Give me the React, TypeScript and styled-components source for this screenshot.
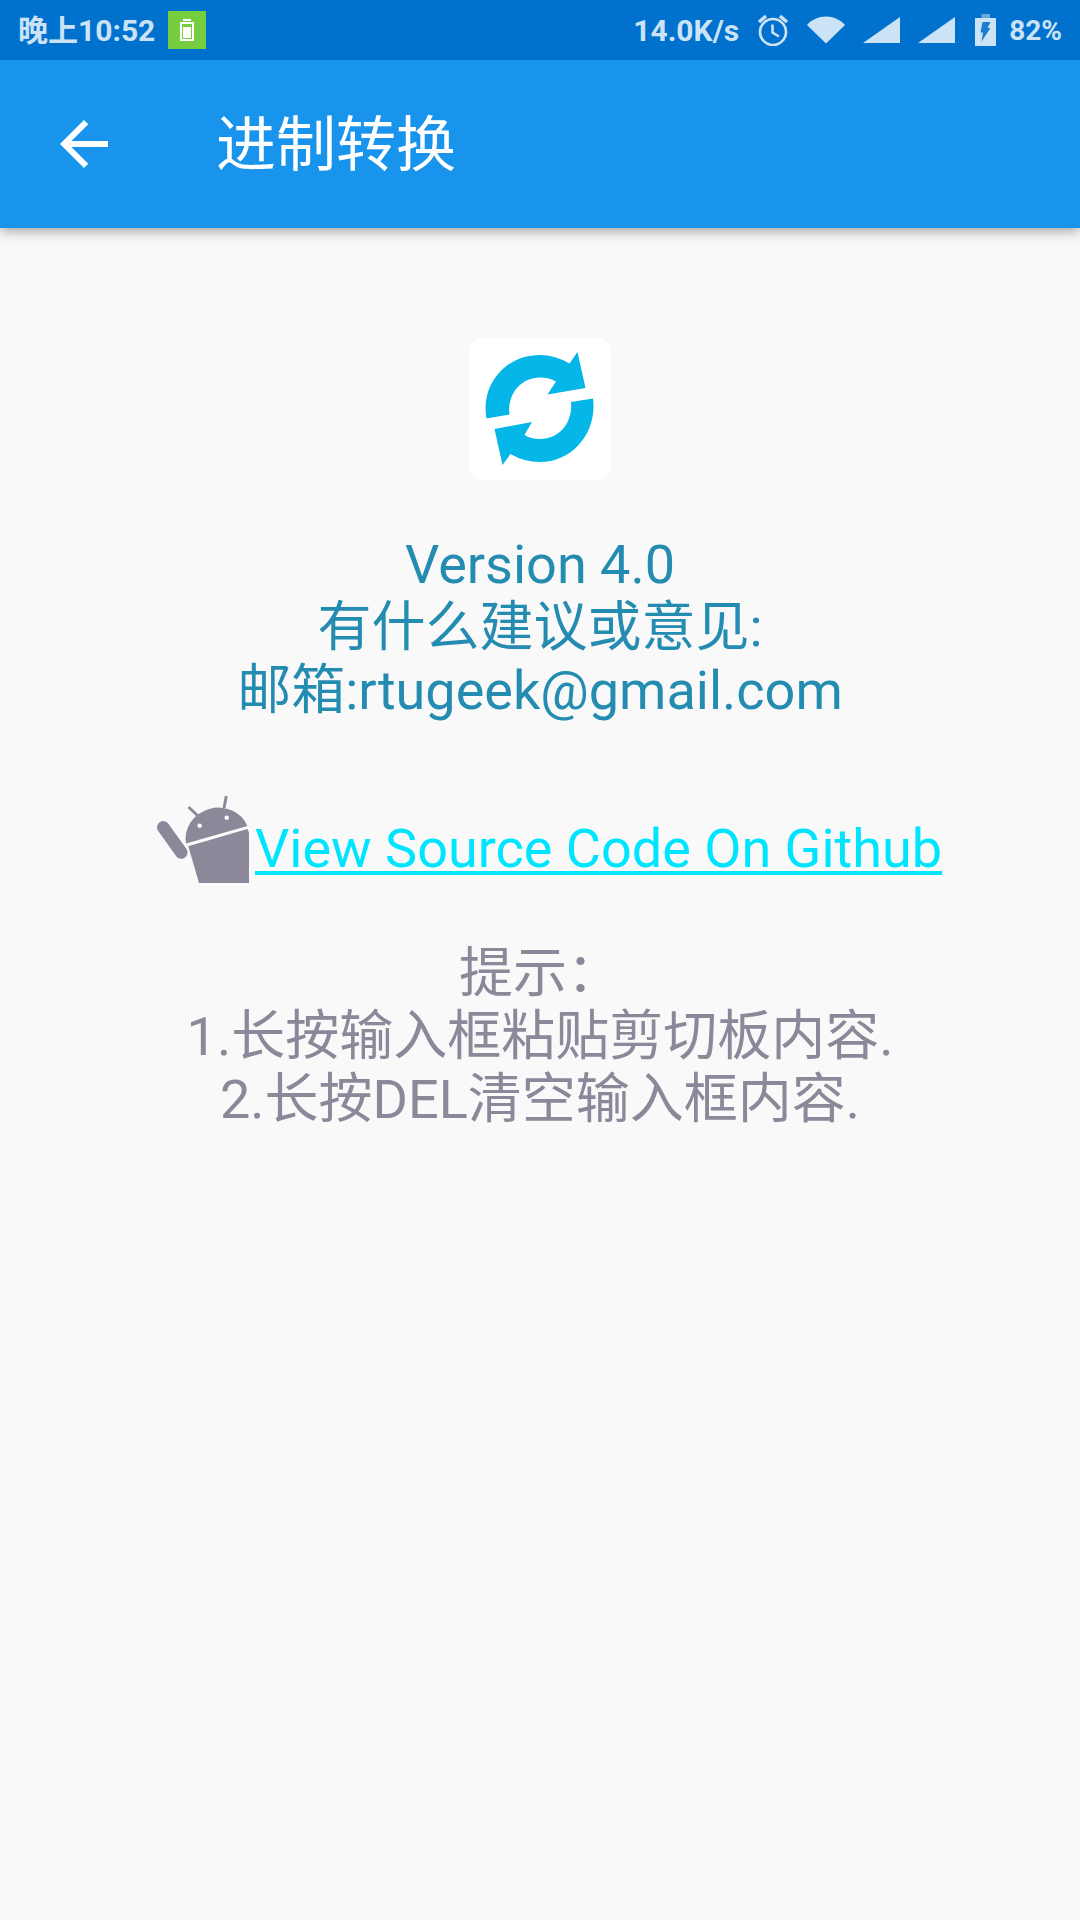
import React from 'react';
import styled, { createGlobalStyle } from 'styled-components';

const GlobalStyle = createGlobalStyle`
  *, *::before, *::after { box-sizing: border-box; }
  html { background: #fafafa; }
  body {
    margin: 0;
    background: #fafafa;
    font-family: Roboto, "Noto Sans CJK SC", sans-serif;
  }
  svg { display: block; flex: none; }
`;

const StatusBar = styled.div`
  display: flex;
  align-items: center;
  justify-content: space-between;
  position: relative;
  z-index: 1;
  height: 60px;
  padding: 0 18px;
  background: #0072ce;
  color: #cce3f5;
  line-height: 36px;
`;

const StatusGroup = styled.div<{ $gap: number }>`
  display: flex;
  align-items: center;
  gap: ${({ $gap }) => $gap}px;
`;

const StatusText = styled.span<{ $size?: number }>`
  padding-top: 2px;
  font-size: ${({ $size = 30 }) => $size}px;
  font-weight: 700;
  white-space: nowrap;
`;

const BatteryGroup = styled(StatusGroup)`
  margin-left: 2px;
`;

const AppBar = styled.header`
  display: flex;
  align-items: center;
  height: 168px;
  padding: 0 48px;
  background: #1994ec;
  color: #ffffff;
  position: relative;
  box-shadow: 0 3px 12px rgba(0, 0, 0, 0.36);
`;

const BackButton = styled.button`
  display: flex;
  align-items: center;
  width: 168px;
  height: 72px;
  padding: 0;
  border: 0;
  background: none;
  color: inherit;
  cursor: pointer;
`;

const Title = styled.h1`
  margin: 0;
  padding-top: 4px;
  font-size: 60px;
  font-weight: 400;
  line-height: 72px;
`;

const About = styled.main`
  display: flex;
  flex-direction: column;
  align-items: center;
  padding: 110px 48px 50px;
  background: #f9f9f9;
  font-size: 54px;
  line-height: 63px;
  text-align: center;
`;

const LogoTile = styled.div`
  display: flex;
  width: 142px;
  height: 142px;
  border-radius: 14px;
  background: #ffffff;
`;

const Paragraph = styled.p<{ $color: string; $top: number }>`
  margin: ${({ $top }) => $top}px 0 0;
  color: ${({ $color }) => $color};
`;

const SourceRow = styled.div`
  display: flex;
  align-items: flex-end;
  margin-top: 71px;
`;

const SourceLink = styled.a`
  padding-bottom: 3px;
  color: #00e5ff;
  text-decoration: underline;
  text-decoration-thickness: 4px;
  text-underline-offset: 4px;
  text-decoration-skip-ink: none;
`;

const BatterySaverIcon = () => (
  <svg width="38" height="38" viewBox="0 0 38 38" aria-hidden="true">
    <rect width="38" height="38" fill="#76cd3e" />
    <rect x="15" y="8" width="8" height="2" fill="#fff" />
    <rect x="13" y="12" width="12" height="17" fill="none" stroke="#fff" strokeWidth="2" />
    <rect x="15" y="16" width="8" height="11" fill="#fff" />
  </svg>
);

const AlarmIcon = () => (
  <svg width="32" height="32" viewBox="0 0 32 32" fill="none" stroke="currentColor" aria-hidden="true">
    <circle cx="16" cy="18" r="13" strokeWidth="2.6" />
    <path d="M15.500 10.500v8l6.500 4" strokeWidth="2.600" />
    <path d="M2 8L9 2M30 8L23 2" strokeWidth="3.400" />
  </svg>
);

const WifiIcon = () => (
  <svg width="38" height="28" viewBox="0 0 38 28" fill="currentColor" aria-hidden="true">
    <path d="M0 9C5 3.500 11.500 0.500 19 0.500S33 3.500 38 9L19 27.500z" />
  </svg>
);

const SignalIcon = () => (
  <svg width="37" height="26" viewBox="0 0 37 26" fill="currentColor" aria-hidden="true">
    <path d="M37 0v26H0z" />
  </svg>
);

const ChargingIcon = () => (
  <svg width="21" height="32" viewBox="0 0 21 32" aria-hidden="true">
    <path d="M6.500 0h8.500v4h-8.500z" fill="#66aae2" />
    <path d="M0 4h21v28H0z" fill="currentColor" />
    <path d="M7.500 8h8l-3 6h3L6.500 27.500l1.500-9H5.500z" fill="#1a7dd0" />
  </svg>
);

const BackIcon = () => (
  <svg width="72" height="72" viewBox="0 0 24 24" fill="currentColor" aria-hidden="true">
    <path d="M20 11H7.830l5.590-5.590L12 4l-8 8 8 8 1.410-1.410L7.830 13H20v-2z" />
  </svg>
);

const ConvertLogo = () => (
  <svg width="142" height="142" viewBox="19 18 142 142" fill="#04b7e8" role="img" aria-label="进制转换">
    <path d="M36.500 98.500C30.500 65 55 35 90 35Q105 35 119.500 43.500L127.500 32 135.500 68 97.500 74.500 106 61.500Q99 57.500 90 57.500C71 57.500 57 74 59.500 94.500z" />
    <path d="M143 78.500C147.500 112 123 142 90 142Q74 142 60.500 134L52.500 145 44.500 109 82 102 74.500 115Q81 119 90 119C110 119 123 102 121 82z" />
  </svg>
);

const AndroidIcon = () => (
  <svg width="117" height="90" viewBox="0 0 117 90" aria-hidden="true">
    <path d="M48 50.500A32 29.500 -16 0 1 109.300 33z" fill="#8a8899" />
    <path d="M50.300 53.300L109.300 36Q111 38 111 42V90H61z" fill="#8a8899" />
    <g fill="none" stroke="#8a8899">
      <path d="M25.300 34.300L43.300 59.500" strokeWidth="12.500" strokeLinecap="round" />
      <path d="M50.500 14L59.500 22.500M88.300 3L86 15" strokeWidth="2.900" />
    </g>
    <circle cx="61.700" cy="32.700" r="2.300" fill="#f9f9f9" />
    <circle cx="88.700" cy="24.700" r="2.300" fill="#f9f9f9" />
  </svg>
);

export default function App() {
  return (
    <>
      <GlobalStyle />
      <StatusBar>
        <StatusGroup $gap={13}>
          <StatusText>晚上10:52</StatusText>
          <BatterySaverIcon />
        </StatusGroup>
        <StatusGroup $gap={18}>
          <StatusText>14.0K/s</StatusText>
          <AlarmIcon />
          <WifiIcon />
          <SignalIcon />
          <SignalIcon />
          <BatteryGroup $gap={13}>
            <ChargingIcon />
            <StatusText $size={28}>82%</StatusText>
          </BatteryGroup>
        </StatusGroup>
      </StatusBar>
      <AppBar>
        <BackButton type="button" aria-label="返回">
          <BackIcon />
        </BackButton>
        <Title>进制转换</Title>
      </AppBar>
      <About>
        <LogoTile>
          <ConvertLogo />
        </LogoTile>
        <Paragraph $color="#248bb1" $top={53}>
          Version 4.0
          <br />
          有什么建议或意见:
          <br />
          邮箱:rtugeek@gmail.com
        </Paragraph>
        <SourceRow>
          <AndroidIcon />
          <SourceLink href="#source">View Source Code On Github</SourceLink>
        </SourceRow>
        <Paragraph $color="#8a8899" $top={59}>
          提示：
          <br />
          1.长按输入框粘贴剪切板内容.
          <br />
          2.长按DEL清空输入框内容.
        </Paragraph>
      </About>
    </>
  );
}
